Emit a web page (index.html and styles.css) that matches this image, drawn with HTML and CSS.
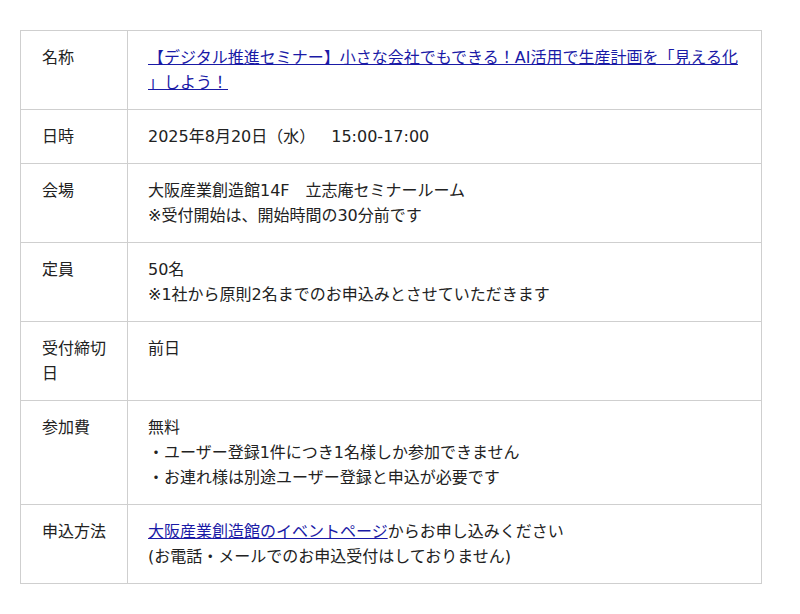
FILE: index.html
```html
<!DOCTYPE html>
<html lang="ja">
<head>
<meta charset="utf-8">
<link rel="stylesheet" href="styles.css">
</head>
<body>
<table class="info">
<tr><th>名称</th><td><a class="title" href="#">【デジタル推進セミナー】小さな会社でもできる！AI活用で生産計画を「見える化」しよう！</a></td></tr>
<tr><th>日時</th><td>2025年8月20日（水）　15:00-17:00</td></tr>
<tr><th>会場</th><td>大阪産業創造館14F　立志庵セミナールーム<br>※受付開始は、開始時間の30分前です</td></tr>
<tr><th>定員</th><td>50名<br>※1社から原則2名までのお申込みとさせていただきます</td></tr>
<tr><th>受付締切日</th><td>前日</td></tr>
<tr><th>参加費</th><td>無料<br>・ユーザー登録1件につき1名様しか参加できません<br>・お連れ様は別途ユーザー登録と申込が必要です</td></tr>
<tr><th>申込方法</th><td><a href="#">大阪産業創造館のイベントページ</a>からお申し込みください<br>(お電話・メールでのお申込受付はしておりません)</td></tr>
</table>
</body>
</html>
```
FILE: styles.css
```css
html, body {
  margin: 0;
  padding: 0;
  background: #fff;
}
body {
  padding: 30px 38px 0 20px;
  font-family: "DejaVu Sans", "Noto Sans CJK JP", sans-serif;
  font-size: 16px;
  line-height: 25px;
  color: #222;
  text-spacing-trim: space-all;
}
.info {
  width: 742px;
  border-collapse: collapse;
}
.info th, .info td {
  border: 1px solid #cfcfcf;
  padding: 14px 20px;
  vertical-align: top;
  text-align: left;
  font-weight: normal;
}
.info th {
  width: 65px;
  padding-left: 21px;
}
.info td {
  padding-left: 20px;
}
.info a {
  color: #1a1aa6;
  text-decoration: underline;
}
.title {
  line-break: anywhere;
}
```
